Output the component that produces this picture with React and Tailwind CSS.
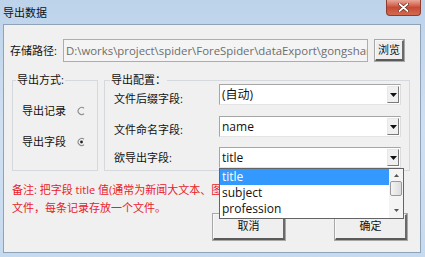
import React from 'react';

const FONT = { fontFamily: '"Open Sans", "Noto Sans CJK SC", sans-serif' };

const ArrowDown = () => (
  <svg width="7" height="4" viewBox="0 0 7 4">
    <path d="M0 0 L7 0 L3.5 4 Z" fill="#111" />
  </svg>
);

const Radio = ({ checked }) => (
  <svg width="9" height="10" viewBox="0 0 9 10">
    <path d="M7 2.2 A3.6 3.6 0 1 0 7 7.8" fill="none" stroke="#8a8a8a" strokeWidth="1.1" />
    {checked && <circle cx="4.5" cy="5" r="1.4" fill="#222" />}
  </svg>
);

const Combo = ({ value, children }) => (
  <div className="relative flex h-[21px] w-[182px] items-center border border-[#a6a6a6] border-r-[#dcdcdc] border-b-[#e4e4e4] bg-white pl-[2px]">
    <span className="flex-1 text-[12px] leading-none text-[#111]">{value}</span>
    <div className="mr-[1px] flex h-[17px] w-[12px] items-center justify-center border border-[#e8e8e8] border-r-[#7a7a7a] border-b-[#7a7a7a] bg-[#f0f0f0]">
      <ArrowDown />
    </div>
    {children}
  </div>
);

const Button = ({ label, className }) => (
  <button className={`flex items-center justify-center border border-[#f8f8f8] border-r-[#6a6a6a] border-b-[#5a5a5a] border-b-2 border-r-2 bg-[#efefef] text-[11px] text-[#111] shadow-[0_0_0_1px_#a8a8a8] ${className}`}>
    {label}
  </button>
);

export default function App() {
  return (
    <div
      className="flex h-[257px] w-[425px] flex-col overflow-hidden bg-gradient-to-b from-[#bdd3ea] via-[#cfe0f2] to-[#c6daef] px-[3px] pb-[4px] pr-[4px]"
      style={FONT}
    >
      {/* title bar */}
      <div className="flex h-[24px] shrink-0 items-start">
        <span className="mt-[5px] text-[11px] leading-[16px] text-[#111]">导出数据</span>
        <div className="ml-auto flex h-[16px] w-[35px] items-center justify-center rounded-b-[4px] border border-t-0 border-[#8f3b2f] bg-gradient-to-b from-[#e8a79a] via-[#c94a34] to-[#d2694f]">
          <svg width="11" height="9" viewBox="0 0 11 9">
            <path d="M1.5 1 L9.5 8 M9.5 1 L1.5 8" stroke="#5a1c14" strokeWidth="3" strokeLinecap="round" />
            <path d="M1.5 1 L9.5 8 M9.5 1 L1.5 8" stroke="#fff" strokeWidth="1.8" strokeLinecap="round" />
          </svg>
        </div>
      </div>

      {/* client area */}
      <div className="flex flex-1 flex-col border border-[#8ea2b8] bg-[#f0f0f0] text-[11px] text-[#111]">
        {/* path row */}
        <div className="mt-[14px] flex items-center">
          <span className="w-[59px] pl-[6px] leading-[16px]">存储路径:</span>
          <div className="h-[23px] w-[305px] overflow-hidden whitespace-nowrap border border-[#abadb3] bg-[#f4f4f4] pl-[2px] text-[11.4px] leading-[21px] text-[#6d6d6d]">
            D:\works\project\spider\ForeSpider\dataExport\gongshang\
          </div>
          <Button label="浏览" className="ml-[7px] h-[21px] w-[29px]" />
        </div>

        {/* groups */}
        <div className="mt-[18px] flex">
          <div className="relative ml-[8px] h-[91px] w-[86px] border border-[#d5d9dd]">
            <span className="absolute -top-[9px] left-[3px] bg-[#f0f0f0] px-[1px] leading-[16px]">导出方式:</span>
            <div className="mt-[20px] flex h-[20px] items-center pl-[9px]">
              <span className="w-[55px]">导出记录</span>
              <Radio />
            </div>
            <div className="mt-[11px] flex h-[20px] items-center pl-[9px]">
              <span className="w-[55px]">导出字段</span>
              <Radio checked />
            </div>
          </div>

          <div className="relative ml-[6px] h-[91px] w-[306px] border border-[#d5d9dd]">
            <span className="absolute -top-[9px] left-[5px] bg-[#f0f0f0] px-[1px] leading-[16px]">导出配置：</span>
            <div className="mt-[3px] flex items-start">
              <span className="mt-[7px] w-[114px] pl-[9px] leading-[16px]">文件后缀字段:</span>
              <Combo value="(自动)" />
            </div>
            <div className="mt-[9px] flex items-start">
              <span className="mt-[6px] w-[114px] pl-[9px] leading-[16px]">文件命名字段:</span>
              <Combo value="name" />
            </div>
            <div className="relative z-10 mt-[9px] flex items-start">
              <span className="mt-[3px] w-[114px] pl-[9px] leading-[16px]">欲导出字段:</span>
              <Combo value="title">
                <div className="absolute -left-[1px] top-[20px] flex h-[51px] w-[185px] border border-[#646464] bg-white text-[12px]">
                  <div className="flex flex-1 flex-col">
                    <div className="flex h-[16px] items-center bg-[#3399ff] pl-[2px] text-white">title</div>
                    <div className="flex h-[16px] items-center pl-[2px] text-[#111]">subject</div>
                    <div className="flex h-[16px] items-center pl-[2px] text-[#111]">profession</div>
                  </div>
                  <div className="flex w-[14px] flex-col items-center bg-[#f4f4f4]">
                    <svg className="mt-[5px]" width="5" height="3" viewBox="0 0 5 3">
                      <path d="M0 3 L5 3 L2.5 0 Z" fill="#555" />
                    </svg>
                    <div className="mt-[4px] h-[15px] w-[12px] rounded-[2px] border border-[#9a9a9a] bg-gradient-to-r from-[#f4f4f4] to-[#dcdcdc]" />
                    <svg className="mt-auto mb-[6px]" width="5" height="3" viewBox="0 0 5 3">
                      <path d="M0 0 L5 0 L2.5 3 Z" fill="#555" />
                    </svg>
                  </div>
                </div>
              </Combo>
            </div>
          </div>
        </div>

        {/* note */}
        <div className="mt-[10px] h-[33px] pl-[8px] text-[11px] leading-[18px] text-[#e8202a]">
          <div className="w-[397px] overflow-hidden whitespace-nowrap">备注: 把字段 title 值(通常为新闻大文本、图片等)导出为单独的文件</div>
          <div>文件，每条记录存放一个文件。</div>
        </div>

        {/* buttons */}
        <div className="flex pl-[209px]">
          <Button label="取消" className="h-[26px] w-[72px]" />
          <Button label="确定" className="ml-[50px] h-[26px] w-[72px]" />
        </div>
      </div>
    </div>
  );
}
